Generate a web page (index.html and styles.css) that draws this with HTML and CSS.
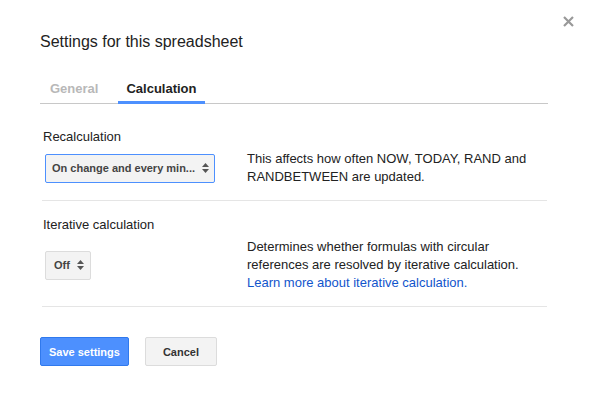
FILE: index.html
```
<!DOCTYPE html>
<html lang="en">
<head>
    <meta charset="UTF-8">
    <meta name="viewport" content="width=device-width, initial-scale=1.0">
    <title>Settings for this spreadsheet</title>
    <link rel="stylesheet" href="styles.css">
</head>
<body>

    <div class="dialog">
        <button class="close" type="button" aria-label="Close">
            <svg width="11" height="11" viewBox="0 0 11 11">
                <path d="M1 1L10 10M10 1L1 10" stroke="#999" stroke-width="2.2" fill="none"/>
            </svg>
        </button>

        <h1 class="title">Settings for this spreadsheet</h1>

        <div class="tabs">
            <div class="tab">General</div>
            <div class="tab active">Calculation</div>
        </div>

        <div class="section first">
            <div class="label">Recalculation</div>
            <div class="row">
                <div class="control">
                    <div class="select focused wide">
                        <span>On change and every min...</span>
                        <svg class="arrows" width="7" height="10" viewBox="0 0 7 10">
                            <path d="M0 4L3.5 0L7 4Z M0 6L3.5 10L7 6Z" fill="#555"/>
                        </svg>
                    </div>
                </div>
                <p class="desc">This affects how often NOW, TODAY, RAND and RANDBETWEEN are updated.</p>
            </div>
        </div>

        <div class="section">
            <div class="label">Iterative calculation</div>
            <div class="row">
                <div class="control">
                    <div class="select">
                        <span>Off</span>
                        <svg class="arrows" width="7" height="10" viewBox="0 0 7 10">
                            <path d="M0 4L3.5 0L7 4Z M0 6L3.5 10L7 6Z" fill="#555"/>
                        </svg>
                    </div>
                </div>
                <p class="desc">
                    Determines whether formulas with circular references are resolved by iterative calculation.
                    <a href="#" class="link">Learn more about iterative calculation.</a>
                </p>
            </div>
        </div>

        <div class="buttons">
            <button type="button" class="btn primary">Save settings</button>
            <button type="button" class="btn">Cancel</button>
        </div>
    </div>

</body>
</html>
```

FILE: styles.css
```
body {
    margin: 0;
    background-color: #fff;
    font-family: 'Liberation Sans', Arial, sans-serif;
    color: #222;
}

.dialog {
    position: relative;
    width: 589px;
    height: 393px;
    box-sizing: border-box;
    padding: 32px 41px 0 40px;
}

.close {
    position: absolute;
    top: 16px;
    right: 15px;
    padding: 0;
    border: none;
    background: none;
    cursor: pointer;
    line-height: 0;
}

.title {
    margin: 0;
    font-size: 16px;
    font-weight: normal;
    line-height: 20px;
    color: #222;
}

.tabs {
    display: flex;
    margin-top: 29px;
    padding-left: 2px;
    border-bottom: 1px solid #c8c8c8;
}

.tab {
    position: relative;
    padding: 0 8px 7px;
    margin-right: 12px;
    font-size: 13px;
    font-weight: bold;
    line-height: 15px;
    color: #b8b8b8;
}

.tab.active {
    color: #222;
}

.tab.active::after {
    content: '';
    position: absolute;
    left: 0;
    right: 0;
    bottom: -1px;
    height: 3px;
    background-color: #4d90fe;
}

.section {
    margin: 0 1px 0 2px;
    padding: 16px 0 14px;
    border-bottom: 1px solid #e5e5e5;
}

.section.first {
    margin-top: 9px;
}

.label {
    padding-left: 1px;
    margin-bottom: 5px;
    font-size: 13px;
    line-height: 16px;
}

.row {
    display: flex;
    align-items: center;
}

.control {
    width: 202px;
    padding-left: 3px;
    flex-shrink: 0;
}

.select {
    display: inline-flex;
    align-items: center;
    justify-content: space-between;
    gap: 7px;
    height: 27px;
    padding: 0 6px 0 8px;
    border: 1px solid #dcdcdc;
    border-radius: 2px;
    background-color: #f3f3f3;
    font-size: 11px;
    font-weight: bold;
    color: #444;
    white-space: nowrap;
}

.select.wide {
    width: 170px;
    height: 29px;
    box-sizing: border-box;
    gap: 4px;
    padding: 0 5px 0 6px;
}

.select.focused {
    border-color: #4d90fe;
}

.arrows {
    flex-shrink: 0;
}

.desc {
    margin: 0;
    width: 300px;
    font-size: 13px;
    line-height: 18px;
    color: #222;
}

.link {
    display: block;
    color: #15c;
    text-decoration: none;
}

.buttons {
    display: flex;
    gap: 16px;
    margin-top: 30px;
}

.btn {
    min-width: 72px;
    height: 29px;
    padding: 0 8px;
    border: 1px solid #dcdcdc;
    border-radius: 2px;
    background-color: #f3f3f3;
    font-family: inherit;
    font-size: 11px;
    font-weight: bold;
    color: #333;
    cursor: pointer;
}

.btn.primary {
    background-color: #4d90fe;
    border-color: #3079ed;
    color: #fff;
}
```
